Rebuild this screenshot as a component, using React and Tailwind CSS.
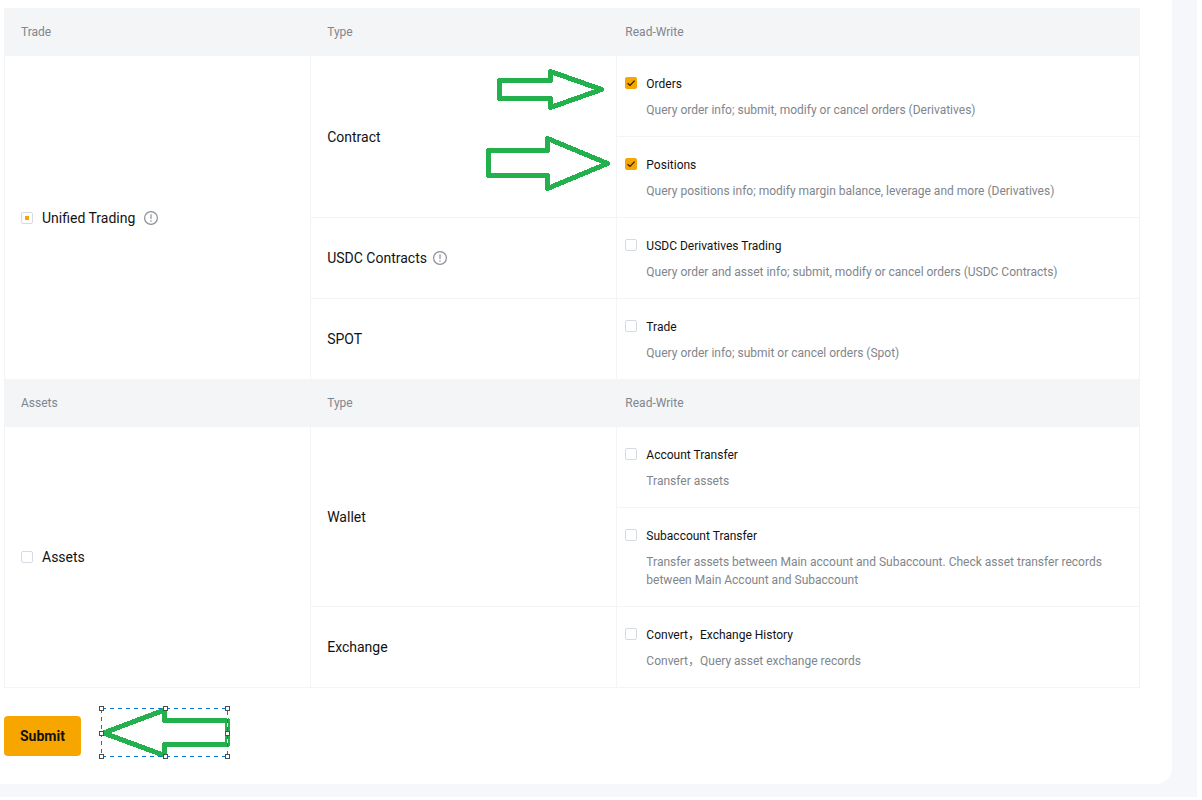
// src/pages/ApiPermissions.jsx
import React, { useEffect, useRef } from 'react';

const SECTIONS = [
  {
    title: 'Trade',
    all: { id: 'unified', label: 'Unified Trading', info: true, partial: true },
    rowCount: 4,
    groups: [
      {
        name: 'Contract',
        marked: true,
        items: [
          {
            id: 'orders',
            label: 'Orders',
            text: 'Query order info; submit, modify or cancel orders (Derivatives)',
            checked: true,
          },
          {
            id: 'positions',
            label: 'Positions',
            text: 'Query positions info; modify margin balance, leverage and more (Derivatives)',
            checked: true,
          },
        ],
      },
      {
        name: 'USDC Contracts',
        info: true,
        items: [
          {
            id: 'usdc',
            label: 'USDC Derivatives Trading',
            text: 'Query order and asset info; submit, modify or cancel orders (USDC Contracts)',
          },
        ],
      },
      {
        name: 'SPOT',
        items: [{ id: 'spot', label: 'Trade', text: 'Query order info; submit or cancel orders (Spot)' }],
      },
    ],
  },
  {
    title: 'Assets',
    all: { id: 'assets', label: 'Assets' },
    rowCount: 3,
    groups: [
      {
        name: 'Wallet',
        items: [
          { id: 'account-transfer', label: 'Account Transfer', text: 'Transfer assets' },
          {
            id: 'subaccount-transfer',
            label: 'Subaccount Transfer',
            text: 'Transfer assets between Main account and Subaccount. Check asset transfer records between Main Account and Subaccount',
          },
        ],
      },
      {
        name: 'Exchange',
        items: [
          { id: 'convert', label: 'Convert，Exchange History', text: 'Convert，Query asset exchange records' },
        ],
      },
    ],
  },
];

const Checkbox = ({ id, checked, partial }) => {
  const ref = useRef(null);

  useEffect(() => {
    ref.current.indeterminate = Boolean(partial);
  }, [partial]);

  return (
    <span className="relative block size-3 shrink-0">
      <input
        ref={ref}
        id={id}
        type="checkbox"
        defaultChecked={checked}
        className="peer block size-3 appearance-none rounded-xs border border-[#d6dae3] bg-white checked:border-[#f7a600] checked:bg-[#f7a600]"
      />
      <svg
        viewBox="0 0 12 12"
        className="pointer-events-none absolute inset-0 hidden size-3 peer-checked:block"
        fill="none"
        stroke="#2b1d00"
        strokeWidth="1.3"
      >
        <path d="M2.6 6.2 5 8.4 9.6 3.6" />
      </svg>
      <span className="pointer-events-none absolute inset-1 hidden bg-[#f7a600] peer-indeterminate:block" />
    </span>
  );
};

const InfoIcon = () => (
  <svg viewBox="0 0 14 14" className="size-3.5 shrink-0" fill="none">
    <circle cx="7" cy="7" r="6.4" stroke="#8b8e96" strokeWidth="1.2" />
    <path d="M7 3.2v4.8M7 9.2v1.5" stroke="#a3a6ad" strokeWidth="1.5" />
  </svg>
);

// Two hand-drawn pointers towards the ticked permissions
const RowArrows = () => (
  <svg
    viewBox="0 0 124 122"
    className="pointer-events-none absolute top-[13px] right-1.5 h-[122px] w-[124px]"
    fill="none"
    stroke="#22b14c"
    strokeWidth="5"
    strokeLinejoin="round"
    shapeRendering="crispEdges"
  >
    <path d="M13.5 11.5H64.5V2.5L115.5 20.5L64.5 38.5V29.5H13.5Z" />
    <path d="M2.5 81.5H61.5V69.5L121.5 94.5L61.5 119.5V106.5H2.5Z" />
  </svg>
);

const HANDLES = [
  [0, 0],
  [64, 0],
  [126, 0],
  [0, 25],
  [126, 25],
  [0, 48],
  [64, 48],
  [126, 48],
];

const SelectedArrow = () => (
  <svg viewBox="0 0 132 53" className="h-[53px] w-[132px]" fill="none" shapeRendering="crispEdges">
    <path
      d="M4.5 27L65.5 4V14.5H128.5V38.5H65.5V49.5Z"
      stroke="#22b14c"
      strokeWidth="5"
      strokeLinejoin="round"
    />
    <path d="M128.5 12V41" stroke="#fff" />
    <rect x="2.5" y="2.5" width="126" height="48" stroke="#0078d7" strokeDasharray="4 4" />
    {HANDLES.map(([x, y]) => (
      <rect key={`${x}-${y}`} x={x + 0.5} y={y + 0.5} width="4" height="4" fill="#fff" stroke="#4d4d4d" />
    ))}
  </svg>
);

const HeadRow = ({ title }) => (
  <tr className="h-12 bg-[#f3f5f7] text-left text-xs text-[#81858c]">
    <th scope="col" className="w-[27%] px-4 font-normal">{title}</th>
    <th scope="col" className="w-[27%] px-4 font-normal">Type</th>
    <th scope="col" className="px-2 font-normal">Read-Write</th>
  </tr>
);

const Permission = ({ item }) => (
  <td className="border-t border-[#f3f4f6] px-2 pt-[19px] pb-[17px] align-top">
    <div className="flex gap-[9px]">
      <div className="pt-0.5">
        <Checkbox id={item.id} checked={item.checked} />
      </div>
      <div className="text-xs leading-[18px]">
        <label htmlFor={item.id} className="block text-[#121214]">{item.label}</label>
        <p className="mt-2 text-[#81858c]">{item.text}</p>
      </div>
    </div>
  </td>
);

const Section = ({ section }) => {
  const { all } = section;
  return (
    <tbody>
      <HeadRow title={section.title} />
      {section.groups.map((group, g) =>
        group.items.map((item, i) => (
          <tr key={item.id} className="[&:nth-child(2)>td]:border-t-0">
            {g === 0 && i === 0 && (
              <td rowSpan={section.rowCount} className="border-r border-[#f3f4f6] px-4">
                <div className="flex items-center gap-[9px]">
                  <Checkbox id={all.id} partial={all.partial} />
                  <label htmlFor={all.id}>{all.label}</label>
                  {all.info && <InfoIcon />}
                </div>
              </td>
            )}
            {i === 0 && (
              <td rowSpan={group.items.length} className="relative border-t border-r border-[#f3f4f6] px-4">
                <div className="flex items-center gap-1.5">
                  {group.name}
                  {group.info && <InfoIcon />}
                </div>
                {group.marked && <RowArrows />}
              </td>
            )}
            <Permission item={item} />
          </tr>
        ))
      )}
    </tbody>
  );
};

export default function App() {
  return (
    <div className="mr-[5px] bg-[#f5f7fb] pr-[25px] pb-[13px] font-['Roboto','Noto_Sans_CJK_SC',sans-serif] text-sm text-[#121214]">
      <main className="rounded-br-2xl bg-white pt-2 pr-8 pb-[25px] pl-1">
        <table className="w-full table-fixed border-separate border-spacing-0 border-x border-b border-[#f3f4f6]">
          {SECTIONS.map((section) => (
            <Section key={section.title} section={section} />
          ))}
        </table>
        <div className="mt-[18px] flex items-start gap-[18px]">
          <button type="button" className="mt-2.5 h-10 rounded bg-[#f7a600] px-4 font-bold">
            Submit
          </button>
          <SelectedArrow />
        </div>
      </main>
    </div>
  );
}
